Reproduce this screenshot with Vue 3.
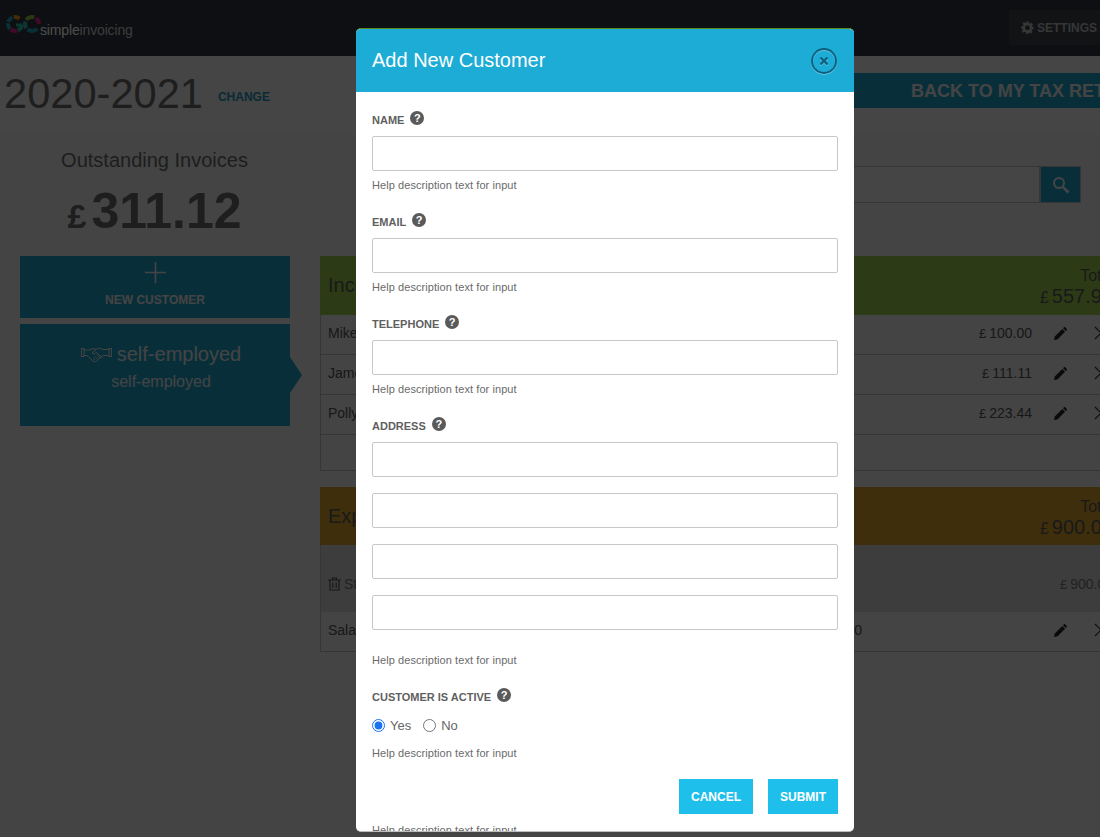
<script setup>
const rows = [
  { name: 'Mike', amount: '100.00' },
  { name: 'James', amount: '111.11' },
  { name: 'Polly', amount: '223.44' }
]
const logoG = [
  { c: '#1f9fb8', o: 55, l: 14 },
  { c: '#e8941e', o: 72, l: 14 },
  { c: '#2bb8a0', o: 2, l: 16 },
  { c: '#e0218a', o: 20, l: 16 },
  { c: '#1f9fb8', o: 38, l: 14 }
]
const logoO = [
  { c: '#8bc43f', o: 60, l: 20 },
  { c: '#e0218a', o: 84, l: 26 },
  { c: '#1f9fb8', o: 12, l: 24 },
  { c: '#2bb8a0', o: 40, l: 16 }
]
</script>

<template>
  <div class="viewport">
    <div class="page">
      <header class="topbar">
        <div class="logo">
          <svg class="logo-mark" width="42" height="40" viewBox="0 0 42 40" fill="none">
            <circle v-for="(s, i) in logoG" :key="'g' + i" cx="15" cy="24" r="7" pathLength="100" :stroke="s.c" stroke-width="4" :stroke-dasharray="s.l + ' 100'" :stroke-dashoffset="-s.o" />
            <path d="M16 25h6" stroke="#2bb8a0" stroke-width="3" />
            <circle v-for="(s, i) in logoO" :key="'o' + i" cx="32" cy="24" r="7" pathLength="100" :stroke="s.c" stroke-width="4" :stroke-dasharray="s.l + ' 100'" :stroke-dashoffset="-s.o" />
          </svg>
          <span class="logo-text"><span class="logo-strong">simple</span><span class="logo-light">invoicing</span></span>
        </div>
        <div class="settings">
          <svg width="13" height="13" viewBox="0 0 24 24" fill="currentColor">
            <path fill-rule="evenodd" d="M10 1h4l.6 3.2 2 .8L19.300 3.200l2.800 2.800-1.800 2.700.8 2L23.500 11v4l-3.200.6-.8 2 1.800 2.700-2.800 2.800-2.700-1.800-2 .8L13.500 24h-4l-.6-3.200-2-.8-2.700 1.800-2.800-2.800 1.800-2.700-.8-2L.5 14v-4l3.200-.6.8-2L2.700 4.700 5.500 1.900l2.700 1.800 2-.8zM12 8a4.500 4.500 0 1 0 0 9 4.500 4.500 0 0 0 0-9z" />
          </svg>
          <span>SETTINGS</span>
        </div>
      </header>

      <section class="yearbar">
        <div class="year-left">
          <h1 class="year">2020-2021</h1>
          <a class="change">CHANGE</a>
        </div>
        <div class="back">BACK TO MY TAX RETURNS</div>
      </section>

      <main class="content">
        <aside class="left">
          <div class="outstanding">
            <div class="out-title">Outstanding Invoices</div>
            <div class="out-amount"><span class="out-pound">£</span>311.12</div>
          </div>
          <div class="card new-card">
            <svg width="21" height="21" viewBox="0 0 21 21" stroke="currentColor" stroke-width="1.600" fill="none">
              <path d="M10.500 0v21M0 10.500h21" />
            </svg>
            <div class="new-label">NEW CUSTOMER</div>
          </div>
          <div class="card client-card">
            <div class="client-title">
              <svg width="31" height="17" viewBox="0 0 31 17" fill="none" stroke="currentColor" stroke-width="1">
                <rect x="0.500" y="2.500" width="2.500" height="8" />
                <rect x="28" y="2.500" width="2.500" height="8" />
                <path d="M3 4h5l4-1.500 3 1 3-1.500 4 1.500h6M3 9.500h3l6 5.500c1 1 2.500 1 3.500 0l6-5.500h6M15 3.500l-4 3.500c1 1.500 3 1 4-.5l7 5.500M12 12l2 2M14 10.500l2.500 2.500M16.500 9.500l2.500 2.500" />
              </svg>
              <span>self-employed</span>
            </div>
            <div class="client-sub">self-employed</div>
          </div>
        </aside>

        <div class="right">
          <div class="search">
            <div class="search-input"></div>
            <div class="search-btn">
              <svg width="18" height="18" viewBox="0 0 18 18" fill="none" stroke="currentColor">
                <circle cx="7" cy="7" r="5" stroke-width="2" />
                <path d="M10.800 10.800 16.500 16.500" stroke-width="2.600" />
              </svg>
            </div>
          </div>

          <div class="band income">
            <span class="band-title">Income</span>
            <div class="band-total">
              <div class="band-label">Total</div>
              <div class="band-amount"><span class="band-pound">£</span>557.98</div>
            </div>
          </div>
          <div class="table">
            <div v-for="r in rows" :key="r.name" class="row">
              <span class="row-name">{{ r.name }}</span>
              <span class="row-amount"><span class="pound">£</span>{{ r.amount }}</span>
              <svg class="pencil" width="13" height="13" viewBox="0 0 13 13" fill="currentColor">
                <path d="M0 13l.8-3.600L8.300 1.900l2.800 2.800L3.600 12.200zM9 1.200 10 .2c.3-.3.8-.3 1.100 0l1.700 1.700c.3.300.3.800 0 1.100l-1 1z" />
              </svg>
              <svg class="cross" width="14" height="14" viewBox="0 0 14 14" fill="none" stroke="currentColor" stroke-width="1.200">
                <path d="M1 1l12 12M13 1L1 13" />
              </svg>
            </div>
            <div class="row-empty"></div>
          </div>

          <div class="band expense">
            <span class="band-title">Expenses</span>
            <div class="band-total">
              <div class="band-label">Total</div>
              <div class="band-amount"><span class="band-pound">£</span>900.00</div>
            </div>
          </div>
          <div class="table">
            <div class="subhead">
              <svg class="trash" width="13" height="14" viewBox="0 0 13 14" fill="none" stroke="currentColor" stroke-width="1.200">
                <path d="M0 3h13M4.500 3V1h4v2M2 3v10h9V3M4.800 5.500v5.500M8.200 5.500v5.500" />
              </svg>
              <span class="row-name">Staff costs</span>
              <span class="sub-amount"><span class="pound">£</span>900.00</span>
            </div>
            <div class="row">
              <span class="sal-name">Salaries</span>
              <span class="sal-amount">£ 900.00</span>
              <span class="row-spacer"></span>
              <svg class="pencil" width="13" height="13" viewBox="0 0 13 13" fill="currentColor">
                <path d="M0 13l.8-3.600L8.300 1.900l2.800 2.800L3.600 12.200zM9 1.200 10 .2c.3-.3.8-.3 1.100 0l1.700 1.700c.3.300.3.800 0 1.100l-1 1z" />
              </svg>
              <svg class="cross" width="14" height="14" viewBox="0 0 14 14" fill="none" stroke="currentColor" stroke-width="1.200">
                <path d="M1 1l12 12M13 1L1 13" />
              </svg>
            </div>
          </div>
        </div>
      </main>
    </div>

    <div class="overlay"></div>

    <div class="modal">
      <div class="modal-head">
        <h2 class="modal-title">Add New Customer</h2>
        <svg class="close" width="26" height="26" viewBox="0 0 26 26" fill="none">
          <circle cx="13" cy="13" r="12" stroke="#0e5f7c" stroke-width="1.800" />
          <path d="M9.500 9.500l7 7M16.500 9.500l-7 7" stroke="#0e5f7c" stroke-width="2.200" />
        </svg>
      </div>
      <form class="modal-body" @submit.prevent>
        <div class="field">
          <div class="label">NAME <span class="help-dot">?</span></div>
          <input class="input" type="text" />
          <div class="help">Help description text for input</div>
        </div>
        <div class="field">
          <div class="label">EMAIL <span class="help-dot">?</span></div>
          <input class="input" type="text" />
          <div class="help">Help description text for input</div>
        </div>
        <div class="field">
          <div class="label">TELEPHONE <span class="help-dot">?</span></div>
          <input class="input" type="text" />
          <div class="help">Help description text for input</div>
        </div>
        <div class="field address">
          <div class="label">ADDRESS <span class="help-dot">?</span></div>
          <div class="stack">
            <input class="input" type="text" />
            <input class="input" type="text" />
            <input class="input" type="text" />
            <input class="input" type="text" />
          </div>
          <div class="help help-address">Help description text for input</div>
        </div>
        <div class="field active">
          <div class="label">CUSTOMER IS ACTIVE <span class="help-dot">?</span></div>
          <div class="radios">
            <label class="radio"><input type="radio" name="active" checked />Yes</label>
            <label class="radio"><input type="radio" name="active" />No</label>
          </div>
          <div class="help help-active">Help description text for input</div>
        </div>
        <div class="actions">
          <button class="btn cancel" type="button">CANCEL</button>
          <button class="btn submit" type="submit">SUBMIT</button>
        </div>
        <div class="help help-clipped">Help description text for input</div>
      </form>
    </div>
  </div>
</template>

<style>
html, body { margin: 0; padding: 0; overflow: hidden; }
</style>

<style scoped>
* { box-sizing: border-box; }
.viewport {
  position: relative;
  width: 1100px;
  height: 837px;
  overflow: hidden;
  background: #e3e3e3;
  font-family: "Liberation Sans", Arial, sans-serif;
  color: #666;
}
.page { width: 1100px; height: 837px; overflow: hidden; }

.topbar {
  height: 56px;
  background: #30333c;
  display: flex;
  align-items: flex-start;
  justify-content: space-between;
}
.logo { display: flex; align-items: flex-start; }
.logo-mark { flex: none; }
.logo-text {
  margin: 22px 0 0 -2px;
  font-size: 14px;
  line-height: 16px;
  letter-spacing: -0.15px;
}
.logo-strong { color: #fff; }
.logo-light { color: #c8c8c8; }
.settings {
  margin-top: 10px;
  width: 91px;
  height: 35px;
  background: #3c4048;
  color: #b4b6ba;
  display: flex;
  align-items: center;
  padding-left: 12px;
  gap: 3px;
  font-size: 12px;
  font-weight: 700;
}

.yearbar {
  height: 78px;
  background: #e8e8e8;
  display: flex;
  justify-content: space-between;
  align-items: flex-start;
}
.year-left { display: flex; align-items: center; padding: 14px 0 0 4px; }
.year { margin: 0; font-size: 41.6px; line-height: 48px; font-weight: 400; color: #666; }
.change { margin: 6px 0 0 15px; font-size: 12px; font-weight: 700; color: #1c8fb4; }
.back {
  margin-top: 17px;
  width: 300px;
  height: 35px;
  flex: none;
  background: #1c9cc4;
  color: #e3e3e3;
  font-size: 18px;
  font-weight: 700;
  line-height: 37px;
  padding-left: 111px;
  white-space: nowrap;
  overflow: hidden;
}

.content { display: flex; padding: 0 0 0 20px; }
.left { width: 270px; flex: none; }
.outstanding { text-align: center; padding-top: 15px; height: 122px; margin-left: -1px; }
.out-title { font-size: 20px; line-height: 23px; color: #666; }
.out-amount {
  margin-top: 11px;
  font-size: 50px;
  line-height: 56px;
  font-weight: 700;
  color: #666;
  white-space: nowrap;
}
.out-pound { font-size: 34px; margin-right: 5px; }
.card { background: #1c9cc4; color: #e3e3e3; text-align: center; }
.new-card { height: 62px; padding-top: 6px; margin-bottom: 6px; }
.new-card svg { display: block; margin: 0 auto; }
.new-label { margin-top: 10px; font-size: 12px; line-height: 14px; font-weight: 700; }
.client-card { position: relative; height: 102px; padding-top: 18px; }
.client-card::after {
  content: "";
  position: absolute;
  left: 100%;
  top: 33px;
  border-left: 12px solid #1c9cc4;
  border-top: 18px solid transparent;
  border-bottom: 18px solid transparent;
}
.client-title {
  display: flex;
  justify-content: center;
  align-items: center;
  gap: 5px;
  font-size: 20px;
  line-height: 24px;
  padding-left: 12px;
}
.client-sub { font-size: 16px; line-height: 20px; margin-top: 6px; padding-left: 12px; }

.right { width: 800px; flex: none; margin-left: 30px; padding-top: 32px; }
.search { display: flex; width: 661px; height: 37px; margin: 0 0 53px 100px; }
.search-input { flex: 1; border: 1px solid #b4b4b4; background: #e8e8e8; }
.search-btn {
  width: 41px;
  background: #1c9cc4;
  border: 1px solid #b4b4b4;
  color: #e8e8e8;
  display: flex;
  align-items: center;
  justify-content: center;
}
.band {
  height: 59px;
  display: flex;
  justify-content: space-between;
  padding: 11px 6px 0 8px;
}
.income { background: #98c24a; }
.expense { background: #d39a2a; height: 58px; }
.band-title { font-size: 20px; line-height: 36px; color: #555; }
.band-total { text-align: right; color: #555; }
.band-label { font-size: 16px; line-height: 18px; }
.band-amount { font-size: 20px; line-height: 22px; margin-right: 1px; }
.band-pound { font-size: 16px; margin-right: 3px; }
.table { border-left: 1px solid #b4b4b4; margin-bottom: 16px; }
.row {
  height: 40px;
  display: flex;
  align-items: center;
  border-bottom: 1px solid #b4b4b4;
  padding: 0 0 3px 7px;
  font-size: 14px;
  color: #505050;
}
.row-name { flex: 1; white-space: nowrap; }
.row-amount { width: 100px; text-align: right; margin-right: 22px; }
.pound { font-size: 13px; margin-right: 3px; }
.pencil { color: #222; flex: none; }
.cross { color: #333; flex: none; margin: 0 12px 0 27px; }
.row-empty { height: 36px; border-bottom: 1px solid #b4b4b4; }
.subhead {
  height: 67px;
  background: #cdcdcd;
  display: flex;
  align-items: center;
  padding: 11px 7px 0;
  font-size: 14px;
  color: #707070;
}
.trash { margin-right: 3px; flex: none; color: #505050; }
.sub-amount { color: #707070; }
.sal-name { width: 300px; }
.sal-amount { width: 234px; text-align: right; }
.row-spacer { flex: 1; }

.overlay { position: absolute; inset: 0; background: rgba(0, 0, 0, 0.7); }

.modal {
  position: absolute;
  left: 356px;
  top: 28px;
  width: 498px;
  height: 804px;
  background: #fff;
  border-radius: 5px;
  border-top: 1px solid #5e8a1c;
  border-bottom: 1px solid #bdbdbd;
  overflow: hidden;
  display: flex;
  flex-direction: column;
}
.modal-head {
  height: 63px;
  flex: none;
  background: #1cacd6;
  display: flex;
  align-items: center;
  justify-content: space-between;
  padding: 0 17px 0 16px;
}
.modal-title { margin: 0; font-size: 20px; font-weight: 400; color: #fff; }
.close { display: block; filter: drop-shadow(0 1px 0 rgba(255, 255, 255, 0.3)); }
.modal-body { padding: 0 16px; overflow: hidden; flex: 1; }
.field { display: flex; flex-direction: column; height: 102px; padding-top: 18px; }
.label {
  height: 26px;
  flex: none;
  display: flex;
  align-items: flex-start;
  gap: 6px;
  font-size: 11px;
  line-height: 20px;
  font-weight: 700;
  color: #5f5f5f;
}
.help-dot {
  width: 14px;
  height: 14px;
  margin-top: 1px;
  border-radius: 50%;
  background: #5a5a5a;
  color: #fff;
  font-size: 11px;
  line-height: 14px;
  text-align: center;
}
.input {
  display: block;
  flex: none;
  width: 100%;
  height: 35px;
  margin: 0;
  padding: 0;
  border: 1px solid #c8c8c8;
  border-radius: 2px;
  background: #fff;
  outline: none;
}
.help {
  margin-top: 8px;
  font-size: 11px;
  line-height: 13px;
  letter-spacing: 0.07px;
  color: #6a6a6a;
  white-space: nowrap;
}
.address { height: 271px; }
.stack { display: flex; flex-direction: column; gap: 16px; }
.help-address { margin-top: 24px; }
.active { height: 93px; }
.radios { display: flex; gap: 12px; height: 20px; margin-top: 2px; align-items: center; }
.radio { display: flex; align-items: center; gap: 5px; font-size: 13px; color: #666; }
.radio input { margin: 0; width: 13px; height: 13px; accent-color: #1a73f0; }
.help-active { margin-top: 12px; }
.actions { display: flex; justify-content: flex-end; gap: 15px; margin-top: 17px; height: 35px; }
.btn {
  height: 35px;
  border: 0;
  padding: 0;
  background: #1fbfeb;
  color: #fff;
  font-family: inherit;
  font-size: 12px;
  font-weight: 700;
}
.cancel { width: 74px; }
.submit { width: 70px; }
.help-clipped { margin-top: 10px; }
</style>
